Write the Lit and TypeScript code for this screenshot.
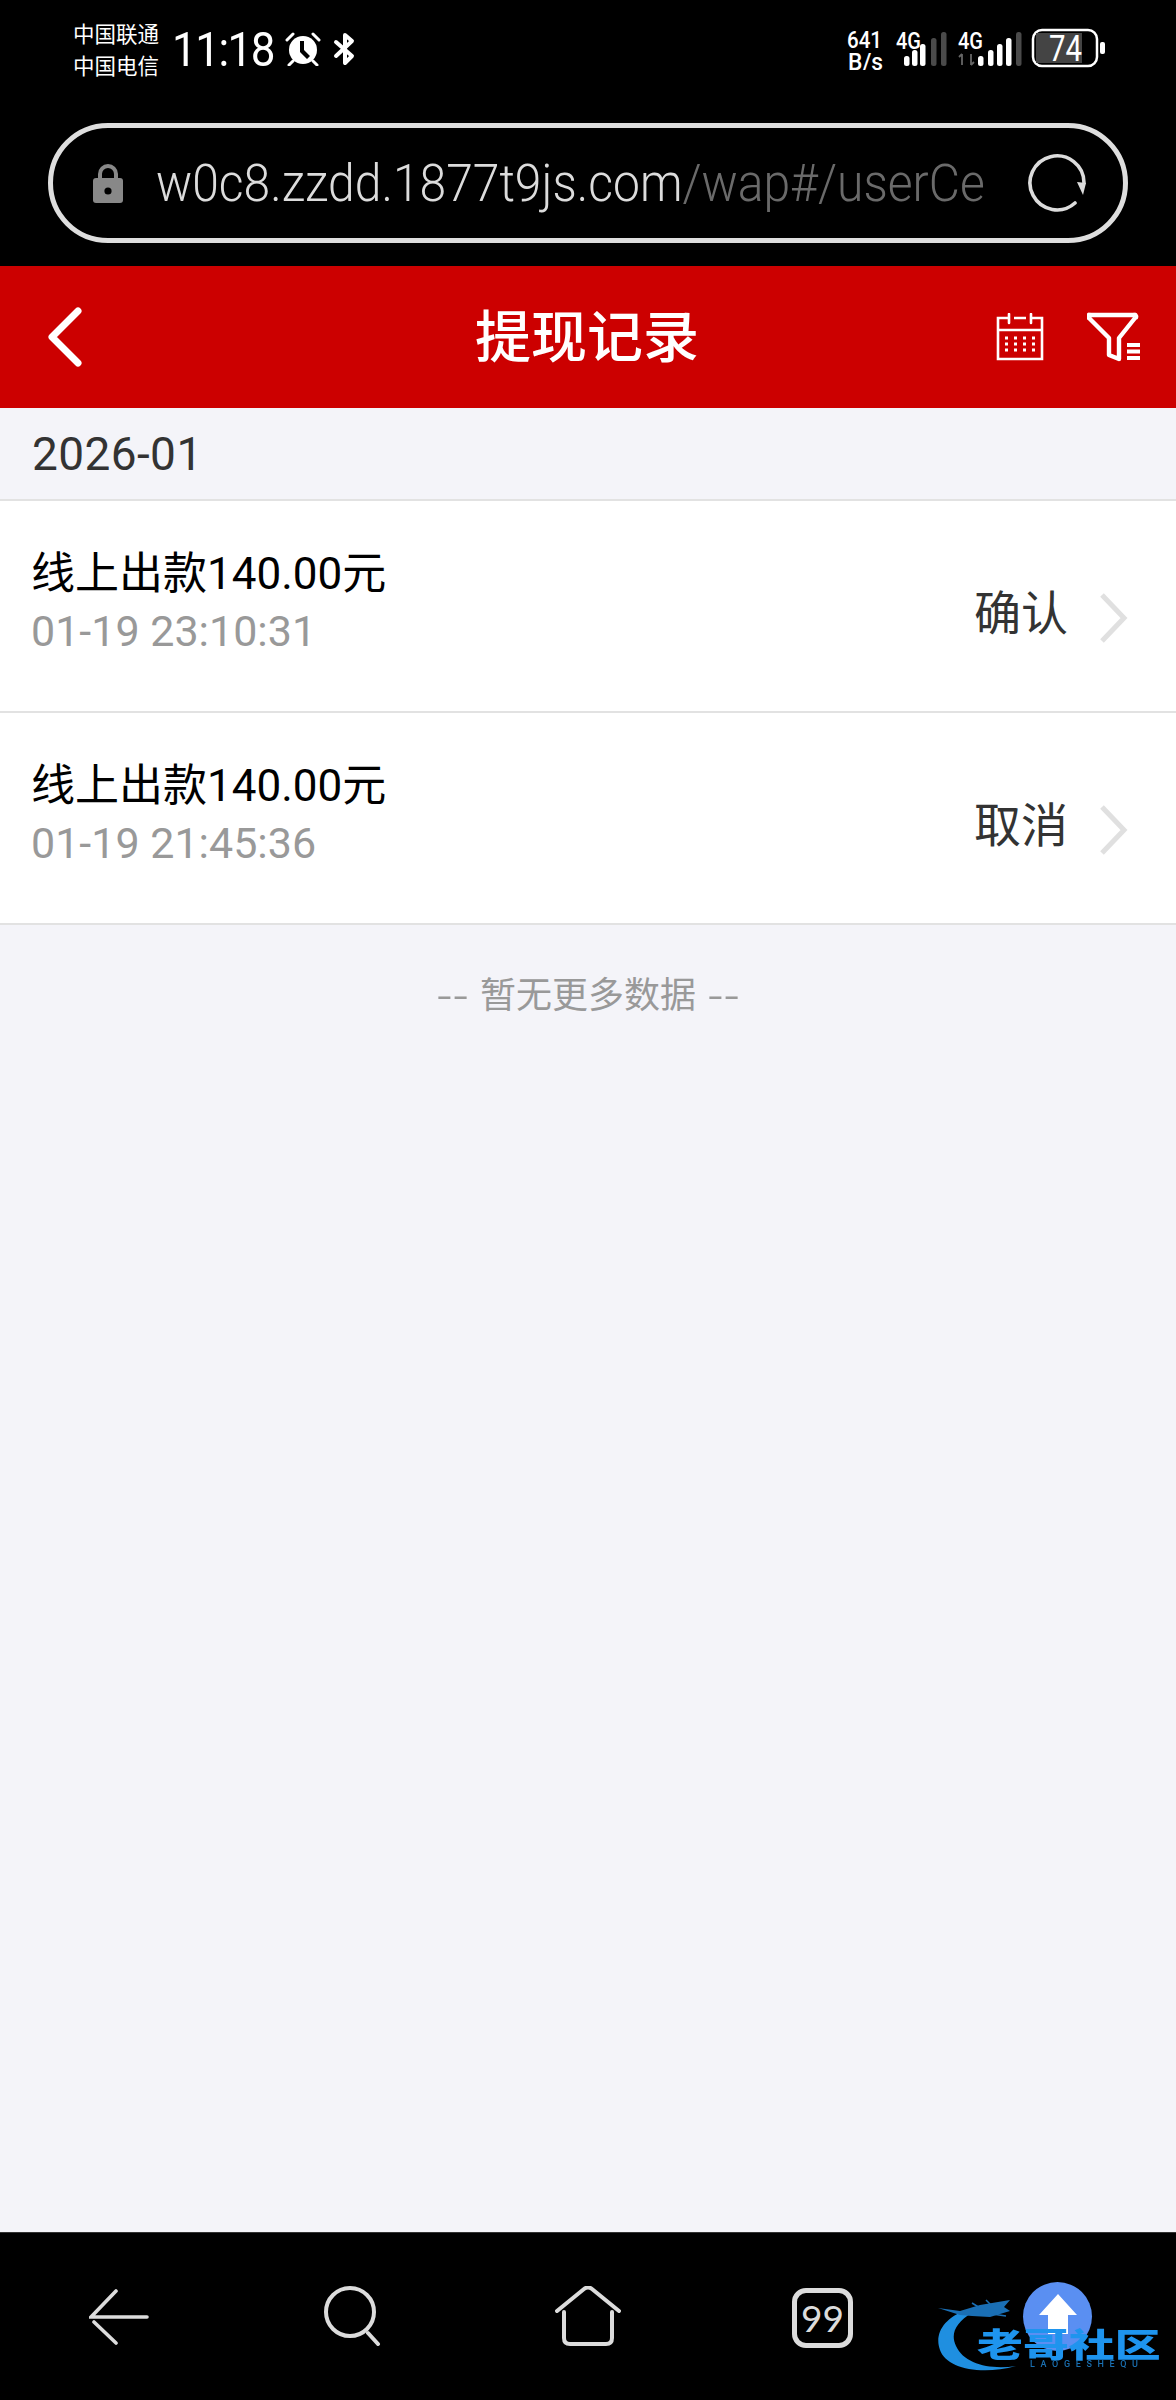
import { LitElement, html, css, svg } from "lit";
import { customElement } from "lit/decorators.js";

const records = [
  { title: "线上出款140.00元", time: "01-19 23:10:31", status: "确认" },
  { title: "线上出款140.00元", time: "01-19 21:45:36", status: "取消" },
];

@customElement("app-root")
export class AppRoot extends LitElement {
  static styles = css`
    :host { display: block; width: 1176px; height: 2400px; font-family: Roboto, "Noto Sans CJK SC", sans-serif; }
    .page { position: relative; display: flex; flex-direction: column; height: 2400px; background: #f4f4f9; overflow: hidden; }
    .top { background: #000; height: 266px; flex: none; display: flex; flex-direction: column; }
    .status { height: 123px; flex: none; display: flex; align-items: flex-start; padding-left: 73px; box-sizing: border-box; color: #fff; }
    .carrier { margin-top: 17px; width: 89px; font: 400 21.5px/32px "Noto Sans CJK SC", sans-serif; white-space: nowrap; }
    .clock { margin: 24px 0 0 10px; width: 105px; font: 400 44px/52px Roboto, sans-serif; letter-spacing: -1.5px; transform: scaleY(1.08); }
    .alarm { margin: 32px 0 0 8px; }
    .bt { margin: 32px 0 0 12px; }
    .status-right { margin: 28px 68px 0 auto; }
    .status-right text { font-family: Roboto, sans-serif; fill: #fff; }
    .url { margin: 0 48px 0 48px; height: 120px; box-sizing: border-box; border: 5px solid #dedede; border-radius: 60px; display: flex; align-items: center; padding-left: 40px; }
    .lock { flex: none; }
    .addr { margin-left: 33px; width: 828px; overflow: hidden; white-space: nowrap; font: 300 48px/60px Roboto, sans-serif; color: #dcdcdc; transform: translateY(1px) scaleY(1.07); }
    .addr span { color: #6a6a6a; }
    .refresh { flex: none; margin-left: 43px; }
    .header { height: 142px; flex: none; background: #cc0000; display: flex; align-items: center; color: #fff; padding: 0 35px 0 46px; }
    .header .title { flex: 1; text-align: center; font: 500 56px/64px "Noto Sans CJK SC", sans-serif; margin: 0 0 8px 94px; }
    .header svg { flex: none; }
    .cal { margin-right: 43px; }
    .month { height: 93px; flex: none; box-sizing: border-box; padding: 0 32px; display: flex; align-items: center; font-size: 46px; letter-spacing: 0.4px; color: #333; border-bottom: 2px solid #e2e2e2; }
    .row { height: 212px; flex: none; box-sizing: border-box; background: #fff; border-bottom: 2px solid #e2e2e2; display: flex; align-items: center; padding: 0 48px 0 31px; }
    .info { flex: 1; padding-bottom: 8px; }
    .t { font: 400 44px/58px Roboto, "Noto Sans CJK SC", sans-serif; color: #000; }
    .d { font-size: 43px; line-height: 56px; color: #999; }
    .st { font: 400 47px/60px "Noto Sans CJK SC", sans-serif; color: #333; margin: 8px 30px 0 0; }
    .chev { margin-top: 23px; }
    .more { height: 134px; display: flex; align-items: center; justify-content: center; font: 400 36px/44px "Noto Sans CJK SC", sans-serif; color: #999; flex: none; gap: 15px; }
    .dash { display: inline-block; transform: scaleX(1.3); }
    .spacer { flex: 1; }
    .bottom { height: 168px; flex: none; background: #000; border-top: 1px solid #333; box-sizing: border-box; display: grid; grid-template-columns: 60px 174px 60px 172px 66px 171px 61px; align-items: start; padding: 53px 0 0 89px; }
    .bottom svg { display: block; }
    .i1 { grid-column: 1; margin-top: 3px; }
    .i2 { grid-column: 3; }
    .i3 { grid-column: 5; }
    .tabs { grid-column: 7; width: 61px; height: 60px; box-sizing: border-box; margin-top: 2px; border: 5px solid #dcdcdc; border-radius: 14px; color: #dcdcdc; font: 400 37px/49px "Lato", sans-serif; text-align: center; }
    .fab { position: absolute; left: 1023px; top: 2282px; width: 69px; height: 69px; border-radius: 50%; background: #5a8ff2; display: flex; align-items: center; justify-content: center; }
    .fab svg { margin-bottom: 6px; }
    .mark { position: absolute; left: 930px; top: 2296px; width: 236px; height: 84px; filter: blur(0.6px); }
    .mark text { font-family: "Noto Sans CJK SC", sans-serif; }
  `;

  private bars(xs: number[], heights: number[], lit: number) {
    return xs.map((x, i) => svg`<rect x=${x} y=${38 - heights[i]} width="5.500" height=${heights[i]} rx="2.500" fill=${i < lit ? "#fff" : "#4a4a4a"}></rect>`);
  }

  render() {
    return html`
      <div class="page">
        <div class="top">
          <div class="status">
            <div class="carrier">中国联通<br />中国电信</div>
            <div class="clock">11:18</div>
            <svg class="alarm" width="36" height="34" viewBox="0 0 36 34">
              <circle cx="18" cy="18" r="14" fill="#fff"></circle>
              <path d="M15 9v11l7 7 3-3-6-6V9z" fill="#000"></path>
              <path d="M2 8l6-6M34 8l-6-6M8 29l-4 4M28 29l4 4" stroke="#fff" stroke-width="3" stroke-linecap="round"></path>
            </svg>
            <svg class="bt" width="22" height="34" viewBox="0 0 22 34" fill="none" stroke="#fff" stroke-width="4" stroke-linejoin="round" stroke-linecap="round">
              <path d="M3 10l16 14-7 7V3l7 6L3 24"></path>
            </svg>
            <svg class="status-right" width="261" height="42" viewBox="0 0 261 42">
              <text x="0" y="20" font-size="23" font-weight="500" textLength="35" lengthAdjust="spacingAndGlyphs">641</text>
              <text x="1" y="42" font-size="23" font-weight="500" textLength="35" lengthAdjust="spacingAndGlyphs">B/s</text>
              <text x="49" y="21" font-size="23" font-weight="500" textLength="25" lengthAdjust="spacingAndGlyphs">4G</text>
              ${this.bars([57, 65, 73, 84, 94], [10, 16, 22, 28, 34], 3)}
              <text x="111" y="21" font-size="23" font-weight="500" textLength="25" lengthAdjust="spacingAndGlyphs">4G</text>
              <path d="M115 26v11M112 29l3-3M124 26v11M124 37l3-3" stroke="#666" stroke-width="1.800" fill="none"></path>
              ${this.bars([131, 141, 150, 159, 169], [10, 16, 22, 28, 34], 4)}
              <rect x="186" y="2" width="64" height="36" rx="9" fill="none" stroke="#fff" stroke-width="2.500"></rect>
              <path d="M189 5h46v30h-46z" fill="#444"></path>
              <text x="202" y="33" font-size="36" font-weight="400" textLength="33" lengthAdjust="spacingAndGlyphs">74</text>
              <rect x="253" y="14" width="5" height="12" rx="2" fill="#fff"></rect>
            </svg>
          </div>
          <div class="url">
            <svg class="lock" width="30" height="40" viewBox="0 0 30 40">
              <path d="M7 18v-7a8 8 0 0 1 16 0v7" fill="none" stroke="#888" stroke-width="4"></path>
              <rect x="0" y="15" width="30" height="25" rx="3" fill="#888"></rect>
              <circle cx="15" cy="28" r="3.600" fill="#000"></circle>
            </svg>
            <div class="addr">w0c8.zzdd.1877t9js.com<span>/wap#/userCenter</span></div>
            <svg class="refresh" width="60" height="60" viewBox="0 0 60 60">
              <path d="M48 50a27 27 0 1 1 9-20" fill="none" stroke="#dcdcdc" stroke-width="3.600" stroke-linecap="round"></path>
              <path d="M50 29l9 1-3 12z" fill="#dcdcdc"></path>
            </svg>
          </div>
        </div>

        <div class="header">
          <svg width="38" height="60" viewBox="0 0 38 60"><path d="M32 4L6 30l26 26" fill="none" stroke="#fff" stroke-width="7" stroke-linecap="round" stroke-linejoin="round"></path></svg>
          <div class="title">提现记录</div>
          <svg class="cal" width="48" height="48" viewBox="0 0 48 48" fill="none" stroke="#fff" stroke-width="2.600">
            <path d="M12 5H2v41h44V5H36M18 5h12M2 17h44"></path>
            <path d="M13 1v9M35 1v9" stroke-linecap="round"></path>
            <path d="M9 25h3M18 25h3M27 25h3M36 25h3M9 31h3M18 31h3M27 31h3M36 31h3M9 37h3M18 37h3M27 37h3M36 37h3" stroke-width="3"></path>
          </svg>
          <svg width="54" height="50" viewBox="0 0 54 50" fill="none" stroke="#fff" stroke-width="4.400" stroke-linejoin="round">
            <path d="M3 3h44a1.500 1.500 0 0 1 1 3L32 26v21l-10-4V26L2 6a1.500 1.500 0 0 1 1-3z"></path>
            <path d="M40 33h13M40 39.500h13M40 46h13" stroke-width="4"></path>
          </svg>
        </div>

        <div class="month">2026-01</div>
        ${records.map(
          (r) => html`
            <div class="row">
              <div class="info">
                <div class="t">${r.title}</div>
                <div class="d">${r.time}</div>
              </div>
              <div class="st">${r.status}</div>
              <svg class="chev" width="30" height="54" viewBox="0 0 30 54"><path d="M4 4l22 23L4 50" fill="none" stroke="#e0e0e0" stroke-width="5"></path></svg>
            </div>
          `
        )}
        <div class="more"><span class="dash">--</span><span>暂无更多数据</span><span class="dash">--</span></div>
        <div class="spacer"></div>

        <div class="bottom">
          <svg class="i1" width="60" height="56" viewBox="0 0 60 56" fill="none" stroke="#dcdcdc" stroke-width="3.600" stroke-linecap="round">
            <path d="M27 2L2 28h56M5 33l22 21"></path>
          </svg>
          <svg class="i2" width="60" height="60" viewBox="0 0 60 60" fill="none" stroke="#dcdcdc" stroke-width="4" stroke-linecap="round">
            <circle cx="27" cy="26" r="24"></circle>
            <path d="M45 47l10 11"></path>
          </svg>
          <svg class="i3" width="66" height="62" viewBox="0 0 66 62" fill="none" stroke="#dcdcdc" stroke-width="4" stroke-linecap="round" stroke-linejoin="round">
            <path d="M2 25L29 3q4-3 8 0l27 22"></path>
            <path d="M9 26v26q0 6 6 6h36q6 0 6-6V26"></path>
          </svg>
          <div class="tabs">99</div>
        </div>

        <div class="fab">
          <svg width="38" height="40" viewBox="0 0 38 40"><path d="M19 0L38 21H29V40H9V21H0z" fill="#fff"></path></svg>
        </div>
        <svg class="mark" viewBox="0 0 236 84">
          <path d="M36 14C14 22 4 38 10 54c6 18 40 26 76 16-26 4-52-2-60-20C20 38 26 26 42 17z" fill="#1f8fe0"></path>
          <path d="M8 12L30 15 50 9 80 4 74 11 80 15 60 21 42 20 30 19z" fill="#1a6fb5"></path>
          <path d="M42 7l8 5M56 4l6 6M62 18l14 2" stroke="#1a6fb5" stroke-width="1.500" fill="none"></path>
          <g transform="translate(47 61) scale(1.02 .74)">
            <text x="0" y="0" font-size="45" font-weight="900" fill="#1e94ee">老哥社区</text>
          </g>
          <text x="100" y="71" font-size="9" font-weight="500" fill="#1a6fb0" textLength="108" lengthAdjust="spacing" style="font-family:Roboto,sans-serif">LAOGESHEQU</text>
        </svg>
      </div>
    `;
  }
}
